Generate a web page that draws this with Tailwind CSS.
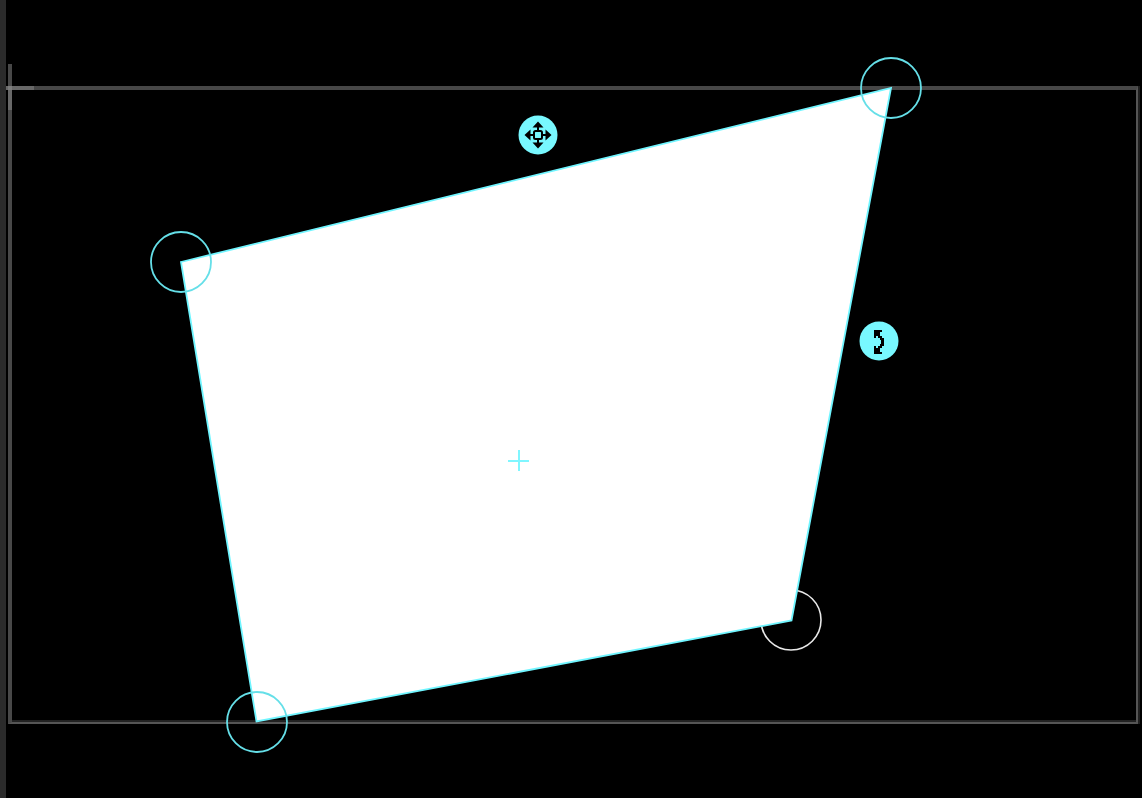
<!DOCTYPE html>
<html lang="en">
<head>
<meta charset="utf-8">
<title>Canvas</title>
<script src="https://cdn.jsdelivr.net/npm/@tailwindcss/browser@4"></script>
</head>
<body class="flex h-screen overflow-hidden bg-black">
<aside class="w-1.5 shrink-0 bg-[#2b2b2b]"></aside>
<main class="relative flex-1" aria-label="Canvas">
  <!-- artboard frame -->
  <div class="absolute top-[86px] bottom-[74px] left-0.5 right-1 border-t-4 border-l-4 border-r-2 border-b-2 border-t-[#474747] border-l-[#484848] border-r-[#555] border-b-[#555]"></div>
  <div class="absolute bottom-[76px] left-1.5 right-1.5 h-0.5 bg-[#222]"></div>
  <div class="absolute top-[86px] bottom-[74px] right-0.5 w-0.5 bg-[#1f1f1f]"></div>
  <!-- origin marker -->
  <div class="absolute top-16 left-0.5 h-[22px] w-1 bg-[#484848]"></div>
  <div class="absolute top-[90px] left-0.5 h-5 w-1 bg-[#686868]"></div>
  <div class="absolute top-[86px] left-0 h-1 w-7 bg-[#686868]"></div>
  <div class="absolute top-[86px] left-0.5 h-1 w-1 bg-[#7c7c7c]"></div>

  <button aria-label="Bottom right corner" class="absolute top-[588px] left-[753px] size-16">
    <svg class="size-16" viewBox="0 0 64 64" fill="none" stroke="#e8e8e8" stroke-width="1.6"><circle cx="32" cy="32" r="30"/></svg>
  </button>
  <svg class="pointer-events-none absolute inset-0 h-full w-full overflow-visible" aria-hidden="true">
    <path d="M175 262 885 88 785.500 620.500 250.500 721.500Z" fill="#fff" stroke="#70f5ff" stroke-width="1.8"/>
    <path d="M502 461h21M513 450v21" stroke="#80f6ff" stroke-width="2"/>
  </svg>
  <button aria-label="Top left corner" class="absolute top-[230px] left-[143px] size-16">
    <svg class="size-16" viewBox="0 0 64 64" fill="none" stroke="#65dfe8" stroke-width="1.8"><circle cx="32" cy="32" r="30"/></svg>
  </button>
  <button aria-label="Top right corner" class="absolute top-14 left-[853px] size-16">
    <svg class="size-16" viewBox="0 0 64 64" fill="none" stroke="#65dfe8" stroke-width="1.8"><circle cx="32" cy="32" r="30"/></svg>
  </button>
  <button aria-label="Bottom left corner" class="absolute top-[690px] left-[219px] size-16">
    <svg class="size-16" viewBox="0 0 64 64" fill="none" stroke="#65dfe8" stroke-width="1.8"><circle cx="32" cy="32" r="30"/></svg>
  </button>

  <button aria-label="Move" class="absolute top-[115px] left-[512px] size-10">
    <svg class="size-10" viewBox="0 0 40 40"><circle cx="20" cy="20" r="19.500" fill="#78f8ff"/>
      <path d="M20 6.500l5.500 6H14.500zM20 33.500l5.500-6H14.500zM6.500 20l6-5.500v11zM33.500 20l-6-5.500v11z"/>
      <path d="M12 19h4v2h-4zM24 19h4v2h-4zM19 12h2v4h-2zM19 24h2v4h-2z"/>
      <rect x="16" y="16" width="8" height="8" rx="1.500" fill="#78f8ff" stroke="#000" stroke-width="2"/>
    </svg>
  </button>
  <button aria-label="Rotate" class="absolute top-[321px] left-[853px] size-10">
    <svg class="size-10" viewBox="0 0 40 40"><circle cx="20" cy="20" r="19.500" fill="#78f8ff"/>
      <path d="M15 9h8v2h-2v4h2v2h2v8h-2v2h-2v4h2v2h-8v-8h2v2h2v-2h2v-2h1v-4h-1v-2h-2v-2h-2v2h-2z"/>
    </svg>
  </button>
</main>
</body>
</html>
